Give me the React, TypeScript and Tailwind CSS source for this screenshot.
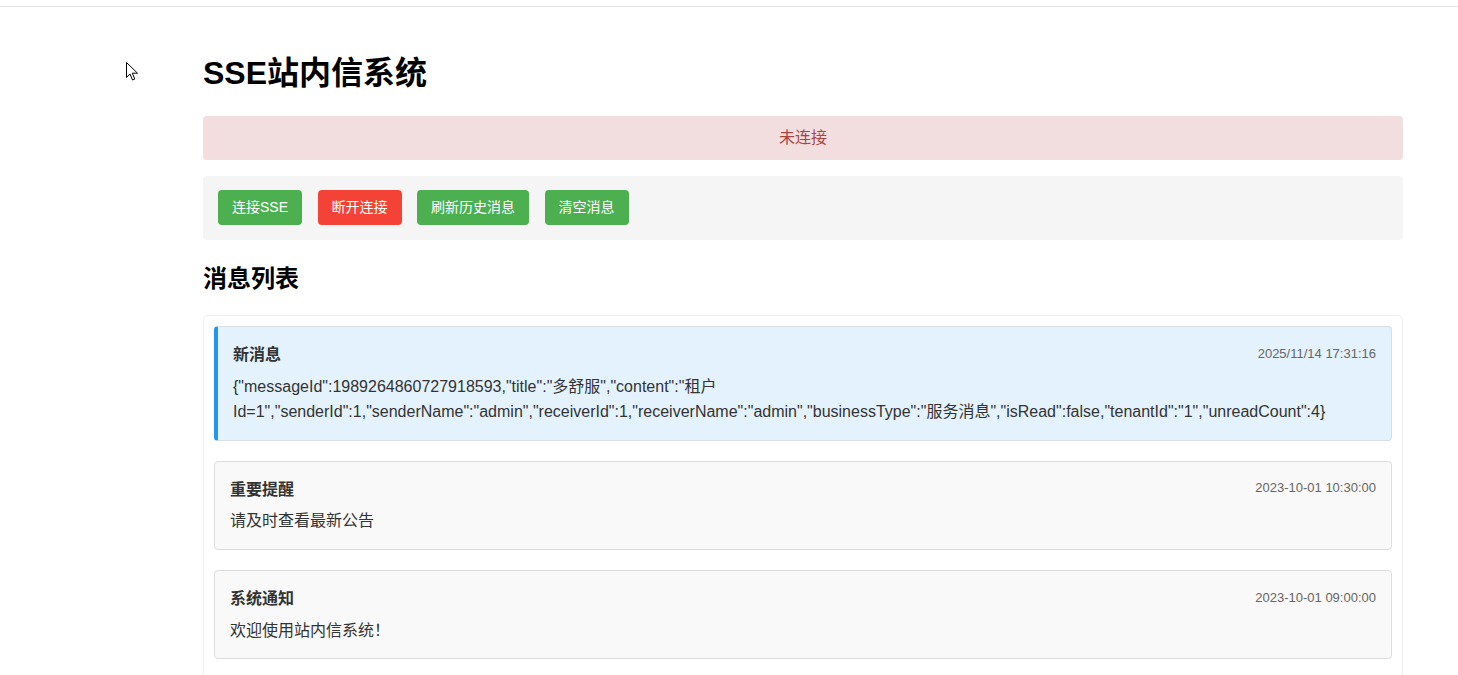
import React from "react";

type Message = {
  id: string;
  title: string;
  time: string;
  content: string;
  fresh?: boolean;
};

const messages: Message[] = [
  {
    id: "new",
    title: "新消息",
    time: "2025/11/14 17:31:16",
    content:
      '{"messageId":1989264860727918593,"title":"多舒服","content":"租户Id=1","senderId":1,"senderName":"admin","receiverId":1,"receiverName":"admin","businessType":"服务消息","isRead":false,"tenantId":"1","unreadCount":4}',
    fresh: true,
  },
  {
    id: "2",
    title: "重要提醒",
    time: "2023-10-01 10:30:00",
    content: "请及时查看最新公告",
  },
  {
    id: "1",
    title: "系统通知",
    time: "2023-10-01 09:00:00",
    content: "欢迎使用站内信系统！",
  },
];

function Cursor() {
  return (
    <svg
      className="pointer-events-none absolute left-[126px] top-[62px]"
      width="13"
      height="20"
      viewBox="0 0 13 20"
    >
      <path
        d="M0.5 0.5 L0.5 15.5 L4 12 L6.5 18 L8.8 17 L6.3 11.2 L11.5 11.2 Z"
        fill="#fff"
        stroke="#000"
        strokeWidth="1"
        strokeLinejoin="round"
      />
    </svg>
  );
}

function MessageCard({ message }: { message: Message }) {
  return (
    <div
      className={
        message.fresh
          ? "rounded-[4px] border border-[#d3dfe9] border-l-4 border-l-[#2196f3] bg-[#e3f2fd] p-[15px]"
          : "rounded-[4px] border border-[#dddddd] bg-[#f9f9f9] p-[15px]"
      }
    >
      <div className="mb-[6px] flex items-center justify-between">
        <span className="text-[16px] font-bold leading-[1.6] text-[#333]">
          {message.title}
        </span>
        <span className="-mt-[3px] text-[13px] text-[#666]">{message.time}</span>
      </div>
      <div className="text-[16px] leading-[1.6] text-[#333]">{message.content}</div>
    </div>
  );
}

const buttonBase = "h-[35px] rounded-[4px] px-[14px] text-[14px] text-white";

export default function App() {
  return (
    <div
      className="relative min-h-[675px] overflow-hidden bg-white text-black"
      style={{ fontFamily: '"Liberation Sans", Arial, "Noto Sans CJK SC", sans-serif' }}
    >
      <div className="h-[7px] border-b border-[#e3e3e3]" />
      <Cursor />
      <div className="ml-[203px] w-[1200px]">
        <h1 className="mt-[46px] text-[32px] font-bold leading-[40px]">SSE站内信系统</h1>
        <div className="mt-[23px] flex h-[44px] items-center justify-center rounded-[4px] bg-[#f2dede] text-[16px] text-[#a94442]">
          未连接
        </div>
        <div className="mt-[16px] flex gap-[15.5px] rounded-[4px] bg-[#f5f5f5] px-[15px] pb-[15px] pt-[14px]">
          <button className={`${buttonBase} bg-[#4caf50]`}>连接SSE</button>
          <button className={`${buttonBase} bg-[#f44336]`}>断开连接</button>
          <button className={`${buttonBase} bg-[#4caf50]`}>刷新历史消息</button>
          <button className={`${buttonBase} bg-[#4caf50]`}>清空消息</button>
        </div>
        <h2 className="mt-[23px] text-[24px] font-bold leading-[32px]">消息列表</h2>
        <div className="mt-[20px] flex flex-col gap-[20px] rounded-[5px] border border-[#eeeeee] px-[10px] pb-[40px] pt-[10px]">
          {messages.map((m) => (
            <MessageCard key={m.id} message={m} />
          ))}
        </div>
      </div>
    </div>
  );
}
